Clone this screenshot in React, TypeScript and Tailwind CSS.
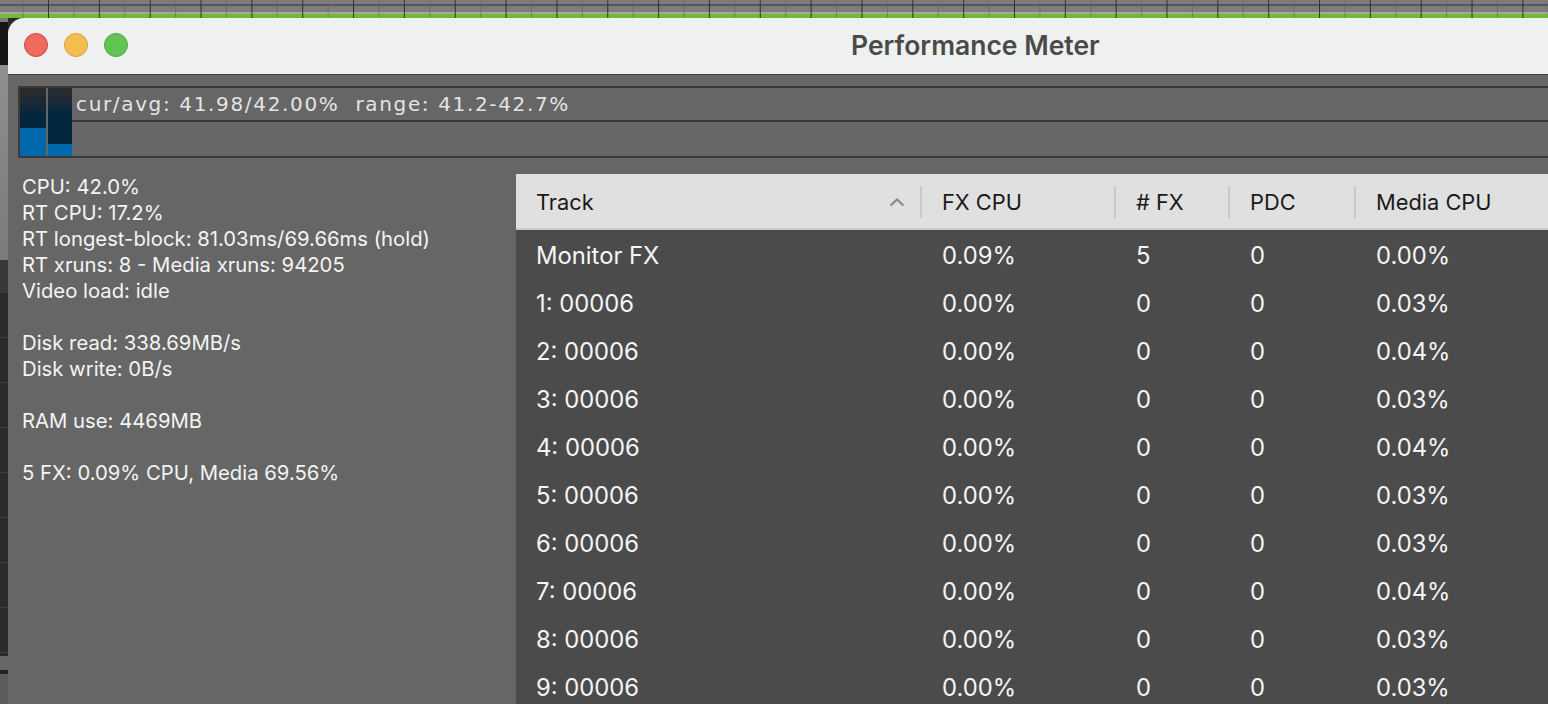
const rows = [
  ["Monitor FX", "0.09%", "5", "0", "0.00%"],
  ["1: 00006", "0.00%", "0", "0", "0.03%"],
  ["2: 00006", "0.00%", "0", "0", "0.04%"],
  ["3: 00006", "0.00%", "0", "0", "0.03%"],
  ["4: 00006", "0.00%", "0", "0", "0.04%"],
  ["5: 00006", "0.00%", "0", "0", "0.03%"],
  ["6: 00006", "0.00%", "0", "0", "0.03%"],
  ["7: 00006", "0.00%", "0", "0", "0.04%"],
  ["8: 00006", "0.00%", "0", "0", "0.03%"],
  ["9: 00006", "0.00%", "0", "0", "0.03%"],
];

const gridCols = "grid grid-cols-[404px_194px_114px_126px_1fr]";

function Ruler() {
  const lines = Array.from({ length: 62 }, (_, i) => 22.6 + i * 25.42);
  return (
    <svg width="1548" height="18" className="block">
      <rect width="1548" height="18" fill="#7d7d7d" />
      <rect y="4" width="1548" height="2" fill="#565656" />
      <rect y="12" width="1548" height="2" fill="#a8a8a8" />
      <rect y="14" width="1548" height="4" fill="#74b934" />
      {lines.map((x, i) => (
        <rect key={i} x={x} y="0" width="1" height="18" fill={i % 2 ? "#333333" : "#666666"} opacity={i % 2 ? 1 : 0.6} />
      ))}
    </svg>
  );
}

function Backdrop() {
  return (
    <div className="flex h-full w-2 shrink-0 flex-col">
      <div className="h-1 bg-[#7a7a7a]" />
      <div className="h-[43px] bg-[#151515]" />
      <div className="h-[195px] bg-gradient-to-b from-[#8f8f8f] to-[#7a7a7a]" />
      <div className="h-[33px] bg-[#383838]" />
      <div className="flex h-[363px] flex-col bg-[#2b2b2b]">
        {Array.from({ length: 8 }, (_, i) => (
          <div key={i} className="h-[45px] border-b border-[#3c3c3c]" />
        ))}
      </div>
      <div className="h-[14px] bg-[#666666]" />
      <div className="h-1 bg-[#222222]" />
      <div className="flex-1 bg-[#5c5c5c]" />
    </div>
  );
}

function Light({ className }: { className: string }) {
  return <div className={`size-6 rounded-full border ${className}`} />;
}

function Meter() {
  return (
    <div className="mt-[11px] ml-[10px] flex h-[72px] border-y-2 border-l-2 border-[#3a3a3a]">
      <div className="relative h-full w-[26px] bg-gradient-to-b from-[#2b2b2b] to-[#03263f] to-40%">
        <div className="absolute inset-x-0 bottom-0 h-[28px] bg-[#0068ad]" />
      </div>
      <div className="w-[2px] bg-[#666666]" />
      <div className="relative h-full w-6 bg-gradient-to-b from-[#2b2b2b] to-[#03263f] to-40%">
        <div className="absolute inset-x-0 bottom-0 h-3 bg-[#0068ad]" />
      </div>
      <div className="flex flex-1 flex-col">
        <div className="h-[34px] whitespace-pre border-b-2 border-[#3a3a3a] pl-1 font-['DejaVu_Sans',sans-serif] text-[20px] leading-[32px] tracking-[1.65px] text-[#e4e4e4]">
          {"cur/avg: 41.98/42.00%  range: 41.2-42.7%"}
        </div>
      </div>
    </div>
  );
}

function Stats() {
  const groups = [
    ["CPU: 42.0%", "RT CPU: 17.2%", "RT longest-block: 81.03ms/69.66ms (hold)", "RT xruns: 8 - Media xruns: 94205", "Video load: idle"],
    ["Disk read: 338.69MB/s", "Disk write: 0B/s"],
    ["RAM use: 4469MB"],
    ["5 FX: 0.09% CPU, Media 69.56%"],
  ];
  return (
    <div className="flex w-[508px] shrink-0 flex-col gap-[26px] pl-[14px] text-[20.3px] leading-[26px] text-[#f4f4f4]">
      {groups.map((g, i) => (
        <div key={i}>
          {g.map((line) => (
            <div key={line}>{line}</div>
          ))}
        </div>
      ))}
    </div>
  );
}

function Table() {
  const headers = ["Track", "FX CPU", "# FX", "PDC", "Media CPU"];
  return (
    <div className="flex-1 bg-[#4b4b4b] text-[23.8px]">
      <div className={`${gridCols} h-[56px] items-center border-b-2 border-[#c9c9c9] bg-[#e0e0e0] pt-[2px] text-[#1a1a1a]`}>
        {headers.map((h, i) => (
          <div key={h} className={`flex h-[32px] items-center pl-5 text-[21.8px] ${i > 0 ? "border-l-2 border-[#c8c8c8]" : ""}`}>
            <span className="flex-1">{h}</span>
            {i === 0 && (
              <svg width="16" height="10" viewBox="0 0 16 10" className="mr-[15px]" fill="none" stroke="#8a8a8a" strokeWidth="2.2">
                <path d="M1.5 8.5 8 2.5l6.5 6" />
              </svg>
            )}
          </div>
        ))}
      </div>
      <div className="pt-[2px] text-[#f5f5f5]">
        {rows.map((r) => (
          <div key={r[0]} className={`${gridCols} h-12 items-center`}>
            {r.map((c, i) => (
              <div key={i} className={i > 0 ? "pl-[22px]" : "pl-5"}>
                {c}
              </div>
            ))}
          </div>
        ))}
      </div>
    </div>
  );
}

export default function App() {
  return (
    <div className="flex h-[704px] w-[1548px] flex-col overflow-hidden bg-[#2b2b2b] font-['Inter',sans-serif]">
      <Ruler />
      <div className="flex min-h-0 flex-1">
        <Backdrop />
        <div className="flex min-w-0 flex-1 flex-col overflow-hidden rounded-tl-[16px] bg-[#666666]">
          <div className="flex h-[57px] shrink-0 items-center gap-4 border-b border-[#3f3f3f] bg-[#eff1f1] pb-[2px] pl-4">
            <Light className="border-[#d0483f] bg-[#ee6a5f]" />
            <Light className="border-[#d99e3a] bg-[#f5bd4f]" />
            <Light className="border-[#4ea93f] bg-[#61c454]" />
            <div className="ml-[707px] pt-[2px] text-[26.5px] font-semibold text-[#4a4a4a]">Performance Meter</div>
          </div>
          <Meter />
          <div className="mt-4 flex min-h-0 flex-1">
            <Stats />
            <Table />
          </div>
        </div>
      </div>
    </div>
  );
}
